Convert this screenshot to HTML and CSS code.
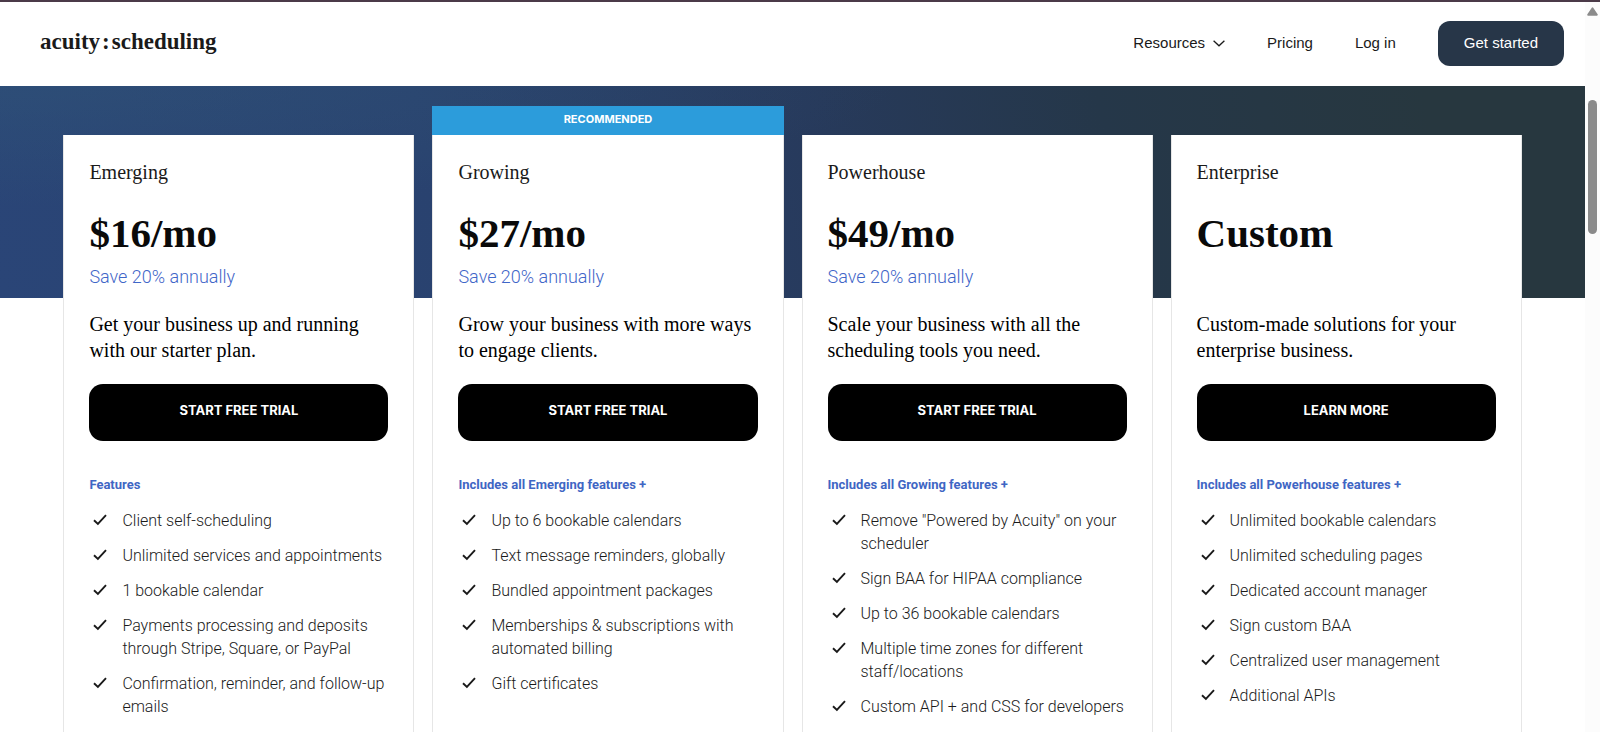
FILE: index.html
```html
<!DOCTYPE html>
<html lang="en">
<head>
  <meta charset="UTF-8" />
  <meta name="viewport" content="width=device-width, initial-scale=1.0" />
  <title>Acuity Scheduling - Pricing</title>
  <link rel="stylesheet" href="styles.css">
</head>
<body>
  <!-- Shared icons -->
  <svg class="icon-defs" aria-hidden="true">
    <symbol id="check" viewBox="0 0 14 12">
      <path d="M1 6.2 L4.9 10 L13 1.2" fill="none" stroke="currentColor" stroke-width="1.9" />
    </symbol>
  </svg>

  <div class="window">
    <div class="page">
      <header class="header">
        <a href="#" class="logo">acuity<span class="logo-colon">:</span>scheduling</a>
        <nav class="nav">
          <a href="#" class="nav-link">
            Resources
            <svg class="chevron" viewBox="0 0 12 8" aria-hidden="true">
              <path d="M0.6 1.8 L6 6.8 L11.4 1.8" fill="none" stroke="currentColor" stroke-width="1.3" />
            </svg>
          </a>
          <a href="#" class="nav-link">Pricing</a>
          <a href="#" class="nav-link">Log in</a>
          <a href="#" class="nav-cta">Get started</a>
        </nav>
      </header>

      <main class="pricing">
        <div class="plans">
          <section class="plan">
            <h2 class="plan-name">Emerging</h2>
            <p class="plan-price">$16/mo</p>
            <p class="plan-save">Save 20% annually</p>
            <p class="plan-text">Get your business up and running with our starter plan.</p>
            <button type="button" class="plan-btn">START FREE TRIAL</button>
            <h3 class="features-title">Features</h3>
            <ul class="features">
              <li><svg class="check"><use href="#check" /></svg><span>Client self-scheduling</span></li>
              <li><svg class="check"><use href="#check" /></svg><span>Unlimited services and appointments</span></li>
              <li><svg class="check"><use href="#check" /></svg><span>1 bookable calendar</span></li>
              <li><svg class="check"><use href="#check" /></svg><span>Payments processing and deposits through Stripe, Square, or PayPal</span></li>
              <li><svg class="check"><use href="#check" /></svg><span>Confirmation, reminder, and follow-up emails</span></li>
            </ul>
          </section>

          <section class="plan">
            <div class="plan-badge">RECOMMENDED</div>
            <h2 class="plan-name">Growing</h2>
            <p class="plan-price">$27/mo</p>
            <p class="plan-save">Save 20% annually</p>
            <p class="plan-text">Grow your business with more ways to engage clients.</p>
            <button type="button" class="plan-btn">START FREE TRIAL</button>
            <h3 class="features-title">Includes all Emerging features +</h3>
            <ul class="features">
              <li><svg class="check"><use href="#check" /></svg><span>Up to 6 bookable calendars</span></li>
              <li><svg class="check"><use href="#check" /></svg><span>Text message reminders, globally</span></li>
              <li><svg class="check"><use href="#check" /></svg><span>Bundled appointment packages</span></li>
              <li><svg class="check"><use href="#check" /></svg><span>Memberships &amp; subscriptions with automated billing</span></li>
              <li><svg class="check"><use href="#check" /></svg><span>Gift certificates</span></li>
            </ul>
          </section>

          <section class="plan">
            <h2 class="plan-name">Powerhouse</h2>
            <p class="plan-price">$49/mo</p>
            <p class="plan-save">Save 20% annually</p>
            <p class="plan-text">Scale your business with all the scheduling tools you need.</p>
            <button type="button" class="plan-btn">START FREE TRIAL</button>
            <h3 class="features-title">Includes all Growing features +</h3>
            <ul class="features">
              <li><svg class="check"><use href="#check" /></svg><span>Remove "Powered by Acuity" on your scheduler</span></li>
              <li><svg class="check"><use href="#check" /></svg><span>Sign BAA for HIPAA compliance</span></li>
              <li><svg class="check"><use href="#check" /></svg><span>Up to 36 bookable calendars</span></li>
              <li><svg class="check"><use href="#check" /></svg><span>Multiple time zones for different staff/locations</span></li>
              <li><svg class="check"><use href="#check" /></svg><span>Custom API + and CSS for developers</span></li>
            </ul>
          </section>

          <section class="plan">
            <h2 class="plan-name">Enterprise</h2>
            <p class="plan-price">Custom</p>
            <p class="plan-save"></p>
            <p class="plan-text">Custom-made solutions for your enterprise business.</p>
            <button type="button" class="plan-btn">LEARN MORE</button>
            <h3 class="features-title">Includes all Powerhouse features +</h3>
            <ul class="features">
              <li><svg class="check"><use href="#check" /></svg><span>Unlimited bookable calendars</span></li>
              <li><svg class="check"><use href="#check" /></svg><span>Unlimited scheduling pages</span></li>
              <li><svg class="check"><use href="#check" /></svg><span>Dedicated account manager</span></li>
              <li><svg class="check"><use href="#check" /></svg><span>Sign custom BAA</span></li>
              <li><svg class="check"><use href="#check" /></svg><span>Centralized user management</span></li>
              <li><svg class="check"><use href="#check" /></svg><span>Additional APIs</span></li>
            </ul>
          </section>
        </div>
      </main>
    </div>

    <div class="scrollbar" aria-hidden="true">
      <svg class="scroll-arrow" viewBox="0 0 10 8">
        <path d="M5 1 L9 7 L1 7 Z" fill="#8b8b8b" stroke="#8b8b8b" stroke-width="1.6" stroke-linejoin="round" />
      </svg>
      <div class="scroll-thumb"></div>
    </div>
  </div>
</body>
</html>
```
FILE: styles.css
```css
/* --- Reset and global styles --- */
* {
  margin: 0;
  padding: 0;
  box-sizing: border-box;
}
body {
  font-family: Roboto, "Liberation Sans", sans-serif;
  background: #fff;
  color: #1a1a1a;
}
a {
  color: inherit;
  text-decoration: none;
}
.icon-defs {
  display: none;
}

/* --- Window: page on the left, scrollbar on the right --- */
.window {
  display: flex;
  height: 100vh;
  overflow: hidden;
  border-top: 2px solid #4b3a48;
}
.page {
  flex: 1;
  min-width: 0;
}

/* --- Header --- */
.header {
  display: flex;
  justify-content: space-between;
  align-items: center;
  height: 84px;
  padding: 0 21px 1px 40px;
}
.logo {
  padding-bottom: 4px;
  font-family: "Liberation Serif", serif;
  font-size: 23px;
  font-weight: 700;
  line-height: 28px;
}
.logo-colon {
  margin: 0 2px;
}
.nav {
  display: flex;
  align-items: center;
  gap: 42px;
  font-family: "Liberation Sans", sans-serif;
  font-size: 15px;
}
.nav-link {
  display: flex;
  align-items: center;
  gap: 8px;
  padding-bottom: 2px;
}
.chevron {
  width: 12px;
  height: 8px;
}
.nav-cta {
  padding: 0 26px 2px;
  border-radius: 12px;
  background: #273648;
  color: #fff;
  line-height: 43px;
}

/* --- Pricing band and cards --- */
.pricing {
  padding: 49px 4% 0;
  background:
    radial-gradient(ellipse at top left, rgba(50, 90, 120, 0.4), transparent 40%)
    no-repeat top / 100% 212px,
    linear-gradient(78deg, #2a4577 0%, #29426f 28%, #273a5c 52%, #253749 70%, #27373f 90%)
    no-repeat top / 100% 212px;
}
.plans {
  display: grid;
  grid-template-columns: repeat(4, 1fr);
  gap: 18px;
}
.plan {
  position: relative;
  min-height: 640px;
  padding: 25px;
  border: 1px solid #e6e6e6;
  border-top: none;
  background: #fff;
}
.plan-badge {
  position: absolute;
  left: -1px;
  right: -1px;
  bottom: 100%;
  height: 29px;
  background: #2c9cdb;
  color: #fff;
  font-family: Inter, sans-serif;
  font-size: 11px;
  font-weight: 700;
  line-height: 26px;
  text-align: center;
}
.plan-name {
  font-family: "Liberation Serif", serif;
  font-size: 20px;
  font-weight: 400;
  line-height: 24px;
}
.plan-price {
  margin-top: 25px;
  font-family: "Liberation Serif", serif;
  font-size: 41px;
  font-weight: 700;
  line-height: 48px;
  color: #0a0a0a;
}
.plan-save {
  height: 24px;
  margin-top: 8px;
  color: #3f66c8;
  font-size: 18px;
  font-weight: 300;
  line-height: 24px;
}
.plan-text {
  margin-top: 22px;
  font-family: "Liberation Serif", serif;
  font-size: 20px;
  line-height: 26px;
  color: #000;
}
.plan-btn {
  display: block;
  width: 100%;
  height: 57px;
  margin-top: 21px;
  padding-bottom: 6px;
  border: none;
  border-radius: 14px;
  background: #000;
  color: #fff;
  font-family: Inter, sans-serif;
  font-size: 13px;
  font-weight: 700;
  cursor: pointer;
}

/* --- Feature lists --- */
.features-title {
  margin-top: 34px;
  color: #3f66c4;
  font-size: 13px;
  font-weight: 700;
  line-height: 20px;
}
.features {
  display: flex;
  flex-direction: column;
  gap: 12px;
  margin-top: 14px;
  list-style: none;
  color: #1a1a1a;
  font-size: 16px;
  font-weight: 300;
  line-height: 23px;
}
.features li {
  display: flex;
  gap: 15px;
  padding-left: 4px;
}
.check {
  flex: none;
  width: 14px;
  height: 12px;
  margin-top: 5px;
  color: #1a1a1a;
}

/* --- Scrollbar --- */
.scrollbar {
  display: flex;
  flex-direction: column;
  align-items: center;
  width: 15px;
  padding-top: 5px;
  background: #fcfcfc;
}
.scroll-arrow {
  width: 11px;
  height: 9px;
}
.scroll-thumb {
  width: 9px;
  height: 134px;
  margin-top: 84px;
  border-radius: 5px;
  background: #8b8b8b;
}
```
